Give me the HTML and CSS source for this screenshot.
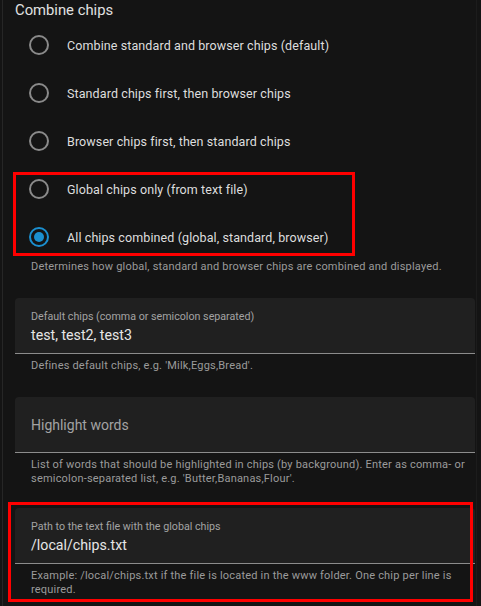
FILE: index.html
```html
<!DOCTYPE html>
<html>
<head>
<meta charset="utf-8">
<link rel="stylesheet" href="styles.css">
</head>
<body>
<div class="panel">
  <div class="title">Combine chips</div>
  <div class="radios">
    <div class="radio-row"><span class="radio"></span><span class="radio-label">Combine standard and browser chips (default)</span></div>
    <div class="radio-row"><span class="radio"></span><span class="radio-label">Standard chips first, then browser chips</span></div>
    <div class="radio-row"><span class="radio"></span><span class="radio-label">Browser chips first, then standard chips</span></div>
    <div class="radio-row"><span class="radio"></span><span class="radio-label">Global chips only (from text file)</span></div>
    <div class="radio-row"><span class="radio checked"></span><span class="radio-label">All chips combined (global, standard, browser)</span></div>
  </div>
  <div class="helper first-helper">Determines how global, standard and browser chips are combined and displayed.</div>

  <div class="field-block">
    <div class="field">
      <div class="field-label">Default chips (comma or semicolon separated)</div>
      <div class="field-value">test, test2, test3</div>
    </div>
    <div class="helper">Defines default chips, e.g. 'Milk,Eggs,Bread'.</div>
  </div>

  <div class="field-block">
    <div class="field empty">
      <div class="field-placeholder">Highlight words</div>
    </div>
    <div class="helper">List of words that should be highlighted in chips (by background). Enter as comma- or semicolon-separated list, e.g. 'Butter,Bananas,Flour'.</div>
  </div>

  <div class="field-block last">
    <div class="field">
      <div class="field-label">Path to the text file with the global chips</div>
      <div class="field-value">/local/chips.txt</div>
    </div>
    <div class="helper">Example: /local/chips.txt if the file is located in the www folder. One chip per line is required.</div>
  </div>

  <div class="annot annot-radios"></div>
  <div class="annot annot-path"></div>
</div>
</body>
</html>
```

FILE: styles.css
```css
html, body {
  margin: 0;
  padding: 0;
  background: #141414;
  height: 100%;
}
body {
  font-family: Roboto, "Noto Sans", "Liberation Sans", sans-serif;
  color: #e1e1e1;
  overflow: hidden;
}
.panel {
  position: relative;
  margin-left: 2px;
  width: 475px;
  min-height: 606px;
  border-left: 1px solid #262626;
  border-right: 1px solid #1c1c1c;
  box-sizing: border-box;
  padding: 0 1px 0 12px;
}
.title {
  font-size: 14.8px;
  line-height: 21px;
  height: 21px;
  color: #e1e1e1;
}
.radios {
  display: flex;
  flex-direction: column;
}
.radio-row {
  display: flex;
  align-items: center;
  height: 48px;
  padding-left: 14px;
  gap: 18px;
}
.radio {
  width: 20px;
  height: 20px;
  box-sizing: border-box;
  border: 2px solid #8a8a8a;
  border-radius: 50%;
  flex: none;
  position: relative;
}
.radio.checked {
  border-color: #1b8fcf;
}
.radio.checked::after {
  content: "";
  position: absolute;
  left: 3px;
  top: 3px;
  width: 10px;
  height: 10px;
  border-radius: 50%;
  background: #1b8fcf;
}
.radio-label {
  font-size: 12.5px;
  color: #dedede;
  letter-spacing: 0.1px;
}
.helper {
  font-size: 11px;
  line-height: 14px;
  color: #9b9b9b;
  padding: 5px 4px 0 16px;
  letter-spacing: 0.2px;
}
.first-helper {
  padding-top: 0;
  margin-top: -1px;
}
.field-block {
  margin-top: 24px;
}
.field-block.last {
  margin-top: 22px;
}
.field {
  background: #202020;
  border-radius: 4px 4px 0 0;
  border-bottom: 1px solid #8c8c8c;
  height: 56px;
  box-sizing: border-box;
  padding: 12px 16px 0 16px;
}
.field-label {
  font-size: 10.7px;
  line-height: 14px;
  color: #a3a3a3;
}
.field-value {
  font-size: 14.2px;
  line-height: 18px;
  color: #e6e6e6;
  margin-top: 2px;
}
.field.empty {
  display: flex;
  align-items: center;
  padding-top: 0;
}
.field-placeholder {
  font-size: 14px;
  color: #a3a3a3;
}
.annot {
  position: absolute;
  border: 3px solid #ff0000;
  box-sizing: border-box;
  pointer-events: none;
}
.annot-radios {
  left: 10px;
  top: 172px;
  width: 342px;
  height: 84px;
}
.annot-path {
  left: 5px;
  top: 502px;
  width: 465px;
  height: 100px;
}
```
